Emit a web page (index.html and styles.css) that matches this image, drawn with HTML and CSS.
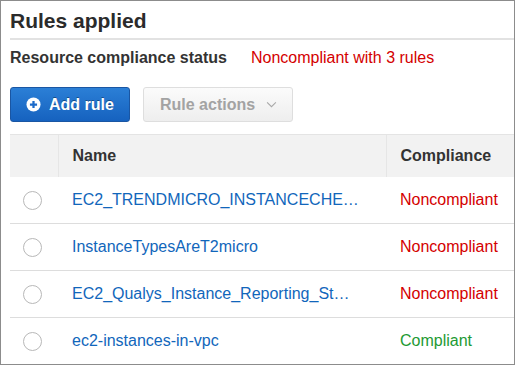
FILE: index.html
```html
<!DOCTYPE html>
<html lang="en">
<head>
  <meta charset="UTF-8" />
  <meta name="viewport" content="width=device-width, initial-scale=1.0" />
  <title>Rules applied</title>
  <link rel="stylesheet" href="styles.css">
</head>
<body>
  <main class="panel">
    <h1 class="panel-title">Rules applied</h1>

    <div class="status">
      <span class="status-label">Resource compliance status</span>
      <span class="status-value">Noncompliant with 3 rules</span>
    </div>

    <div class="actions">
      <button class="btn btn-primary" type="button">
        <svg class="btn-icon" viewBox="0 0 16 16" aria-hidden="true">
          <circle cx="8" cy="8" r="7.5" fill="#fff" />
          <path d="M8 4.2v7.6M4.2 8h7.6" stroke="#1b6ac9" stroke-width="2.4" />
        </svg>
        Add rule
      </button>
      <button class="btn btn-disabled" type="button" disabled>
        Rule actions
        <svg class="chevron" viewBox="0 0 12 8" aria-hidden="true">
          <path d="M1 1.5l5 5 5-5" fill="none" stroke="#a8a8a8" stroke-width="1.2" />
        </svg>
      </button>
    </div>

    <table class="rules">
      <thead>
        <tr>
          <th class="col-select"></th>
          <th class="col-name">Name</th>
          <th class="col-status">Compliance</th>
        </tr>
      </thead>
      <tbody>
        <tr>
          <td class="col-select"><span class="radio"></span></td>
          <td class="col-name"><a href="#">EC2_TRENDMICRO_INSTANCECHE…</a></td>
          <td class="col-status bad">Noncompliant</td>
        </tr>
        <tr>
          <td class="col-select"><span class="radio"></span></td>
          <td class="col-name"><a href="#">InstanceTypesAreT2micro</a></td>
          <td class="col-status bad">Noncompliant</td>
        </tr>
        <tr>
          <td class="col-select"><span class="radio"></span></td>
          <td class="col-name"><a href="#">EC2_Qualys_Instance_Reporting_St…</a></td>
          <td class="col-status bad">Noncompliant</td>
        </tr>
        <tr>
          <td class="col-select"><span class="radio"></span></td>
          <td class="col-name"><a href="#">ec2-instances-in-vpc</a></td>
          <td class="col-status good">Compliant</td>
        </tr>
      </tbody>
    </table>
  </main>
</body>
</html>
```

FILE: styles.css
```css
body {
  margin: 0;
  background-color: #ffffff;
  font-family: "Liberation Sans", Arial, sans-serif;
  color: #333333;
}
.panel {
  box-sizing: border-box;
  width: 515px;
  height: 365px;
  border: 1px solid #8c8c8c;
  padding-left: 9px;
  overflow: hidden;
}
.panel-title {
  margin: 0;
  padding: 8px 0 5px;
  font-size: 21px;
  line-height: 24px;
  font-weight: bold;
  color: #2b2b2b;
  border-bottom: 2px solid #e2e2e2;
}
.status {
  margin-top: 8px;
  font-size: 16px;
  line-height: 20px;
  display: flex;
  gap: 24px;
}
.status-label {
  font-weight: bold;
  color: #333333;
}
.status-value {
  color: #d40000;
}
.actions {
  margin-top: 19px;
  display: flex;
  gap: 13px;
}
.btn {
  box-sizing: border-box;
  height: 35px;
  border-radius: 3px;
  font-family: inherit;
  font-size: 16px;
  font-weight: bold;
  display: inline-flex;
  align-items: center;
  padding: 0;
}
.btn-primary {
  width: 120px;
  padding-left: 15px;
  gap: 8px;
  color: #ffffff;
  background: linear-gradient(#2b7fd6, #1662bf);
  border: 1px solid #1a56a3;
  text-shadow: 0 -1px 0 rgba(0, 0, 0, 0.35);
}
.btn-icon {
  width: 15px;
  height: 15px;
}
.btn-disabled {
  width: 150px;
  padding-left: 16px;
  gap: 11px;
  color: #a3a3a3;
  background: linear-gradient(#fbfbfb, #eeeeee);
  border: 1px solid #dedede;
}
.chevron {
  width: 11px;
  height: 7px;
}
.rules {
  margin-top: 12px;
  border-collapse: collapse;
  table-layout: fixed;
  width: 620px;
  font-size: 16px;
}
.rules th {
  height: 42px;
  padding: 0 14px;
  text-align: left;
  font-weight: bold;
  color: #333333;
  background-color: #f2f2f2;
  border-top: 1px solid #e4e4e4;
  border-left: 1px solid #e6e6e6;
}
.rules th:first-child {
  border-left: none;
}
.rules td {
  height: 46px;
  padding: 0 14px;
  border-bottom: 1px solid #dddddd;
  white-space: nowrap;
}
.rules tbody tr:last-child td {
  border-bottom: none;
}
.col-select {
  width: 48px;
  box-sizing: border-box;
}
.rules td.col-select {
  padding: 0 0 0 13px;
}
.col-name {
  width: 328px;
  box-sizing: border-box;
}
.col-status {
  width: 244px;
}
.radio {
  display: block;
  box-sizing: border-box;
  width: 19px;
  height: 19px;
  border: 1px solid #b8b8b8;
  border-radius: 50%;
  background-color: #ffffff;
}
.rules a {
  color: #1166bb;
  text-decoration: none;
}
.bad {
  color: #d40000;
}
.good {
  color: #1d9a33;
}
```
